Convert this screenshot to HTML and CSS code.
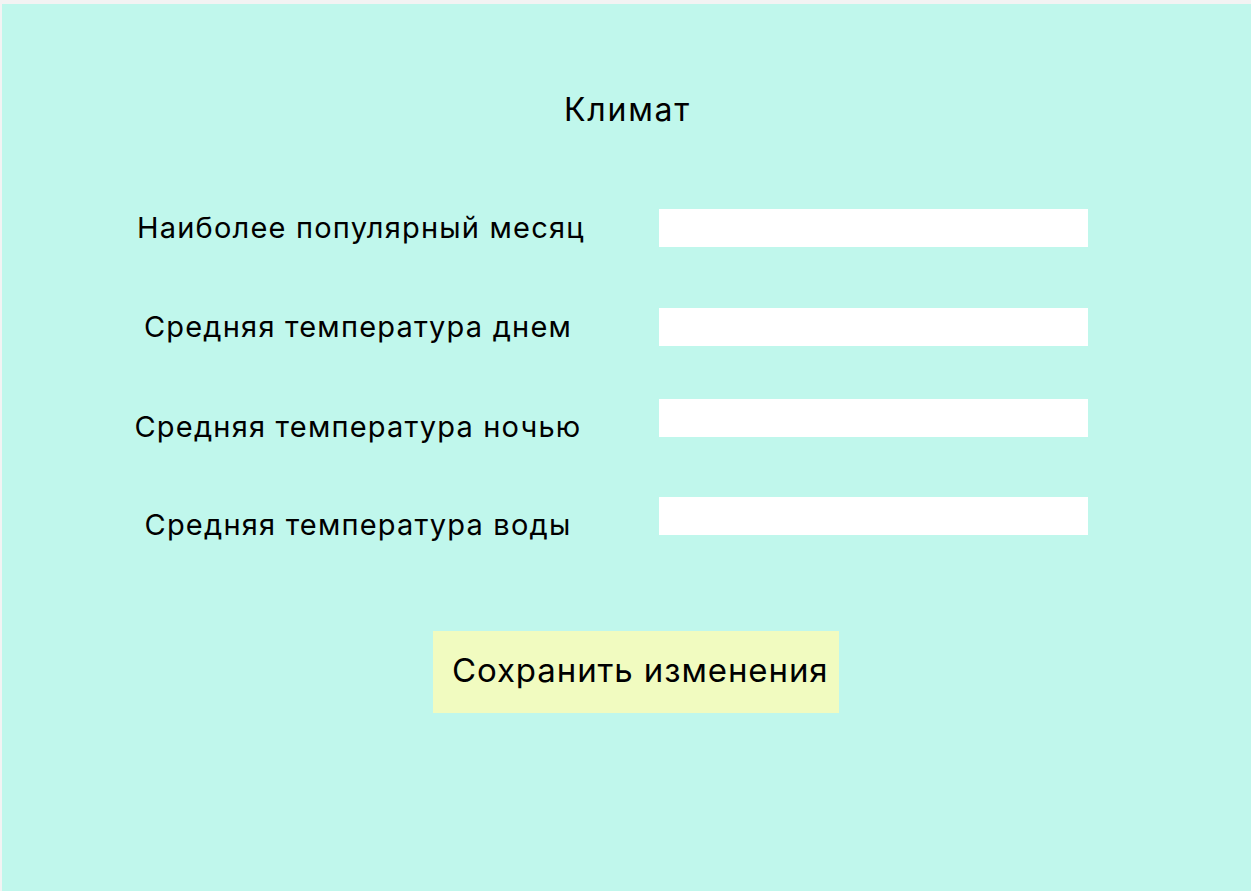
FILE: index.html
```html
<!DOCTYPE html>
<html lang="ru">
<head>
    <meta charset="UTF-8">
    <meta name="viewport" content="width=device-width, initial-scale=1.0">
    <title>Климат</title>
    <link rel="stylesheet" href="styles.css">
</head>
<body>
    <main class="panel">
        <h2 class="title">Климат</h2>

        <form class="form">
            <div class="row row-first">
                <label for="month">Наиболее популярный месяц</label>
                <input type="text" id="month" class="field">
            </div>
            <div class="row">
                <label for="tday">Средняя температура днем</label>
                <input type="text" id="tday" class="field">
            </div>
            <div class="row row-low">
                <label for="tnight">Средняя температура ночью</label>
                <input type="text" id="tnight" class="field">
            </div>
            <div class="row row-low">
                <label for="twater">Средняя температура воды</label>
                <input type="text" id="twater" class="field">
            </div>
        </form>

        <div class="actions">
            <button type="button" class="save">Сохранить изменения</button>
        </div>
    </main>
</body>
</html>
```

FILE: styles.css
```css
*{
    margin: 0;
    padding: 0;
    box-sizing: border-box;
}

body{
    background-color: #f3f3f3;
    padding: 4px 0 0 2px;
    font-family: Inter, "Noto Sans", sans-serif;
    color: #000;
}

/* main mint panel */
.panel{
    height: 887px;
    background-color: #c0f7ec;
    padding-top: 88px;
}

.title{
    font-size: 32px;
    font-weight: 400;
    letter-spacing: 1.8px;
    line-height: 36px;
    text-align: center;
    padding-left: 2px;
}

/* form rows */
.form{
    margin: 81px 0 0 131px;
    width: 957px;
}
.row{
    display: grid;
    grid-template-columns: 450px 429px;
    grid-template-rows: 38px;
    column-gap: 76px;
    align-items: center;
    height: 38px;
}
.row:nth-child(2){
    margin-top: 61px;
}
.row:nth-child(3){
    margin-top: 53px;
}
.row:nth-child(4){
    margin-top: 60px;
}
.row label{
    font-size: 29px;
    letter-spacing: 1.2px;
    line-height: 34px;
    text-align: center;
    white-space: nowrap;
}
.row-first label{
    padding-left: 4px;
}
.row-low label{
    align-self: start;
    margin-top: 11px;
}

.field{
    height: 38px;
    width: 429px;
    border: none;
    outline: none;
    background-color: #fff;
}

/* save button */
.actions{
    display: flex;
    justify-content: center;
    padding-left: 19px;
    margin-top: 96px;
}
.save{
    width: 406px;
    height: 82px;
    border: none;
    background-color: #f1fbc0;
    font-family: inherit;
    font-size: 33px;
    letter-spacing: 0.9px;
    color: #000;
    padding: 0 8px 4px 19px;
    text-align: left;
}
```
